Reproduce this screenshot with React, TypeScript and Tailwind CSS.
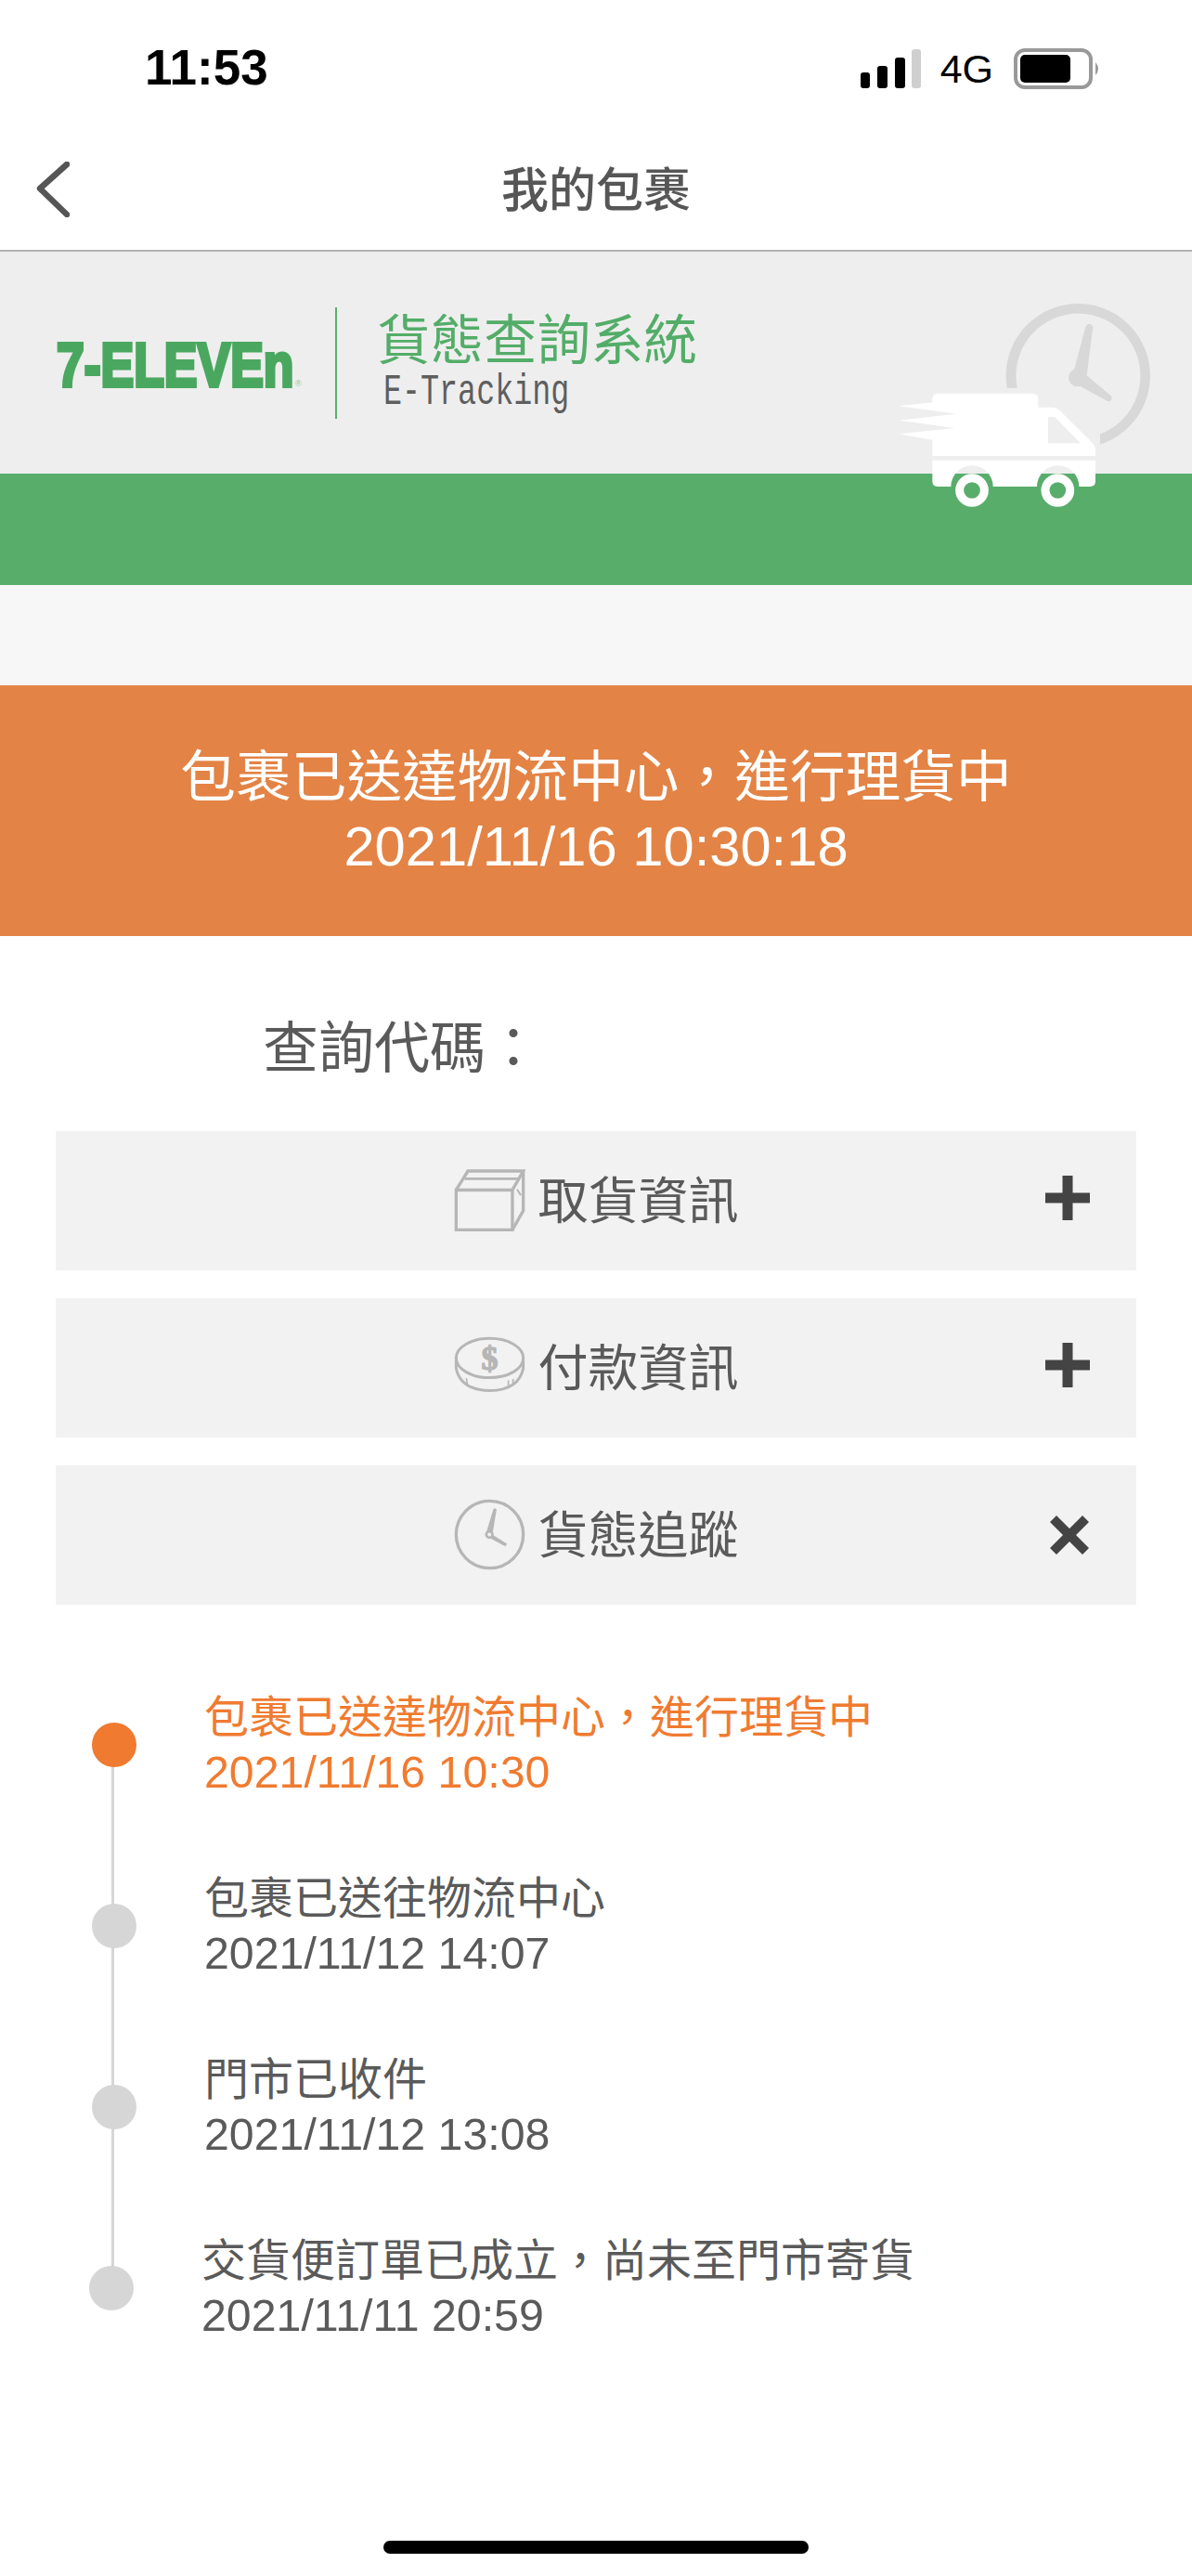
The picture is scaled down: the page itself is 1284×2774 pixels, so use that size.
import React from "react";

const SANS = "font-['Liberation_Sans','Noto_Sans_CJK_TC',sans-serif]";

function StatusBar() {
  return (
    <div className="h-[148px] flex items-center pl-[156px] pr-[97px] justify-between text-black">
      <span className="text-[53px] font-bold leading-none mb-[3px]">11:53</span>
      <div className="flex items-center">
        <svg width="66" height="42" viewBox="0 0 66 42" className="mr-[20px]">
          <rect x="0" y="25" width="10" height="17" rx="3" fill="#000" />
          <rect x="18" y="18" width="11" height="24" rx="3" fill="#000" />
          <rect x="37" y="9" width="11" height="33" rx="3" fill="#000" />
          <rect x="55" y="0" width="10" height="42" rx="3" fill="#cfcfcf" />
        </svg>
        <span className="text-[43px] font-normal leading-none mr-[22px]">4G</span>
        <svg width="95" height="44" viewBox="0 0 95 44">
          <rect x="2" y="2" width="81" height="40" rx="10" fill="none" stroke="#999" strokeWidth="4" />
          <rect x="7" y="7" width="54" height="30" rx="5" fill="#000" />
          <path d="M88 15 Q94 22 88 29 Z" fill="#999" />
        </svg>
      </div>
    </div>
  );
}

function NavBar() {
  return (
    <div className="h-[123px] border-b-2 border-[#b2b2b2] pb-[7px] relative flex items-center justify-center">
      <svg width="36" height="60" viewBox="0 0 36 60" className="absolute left-[39px] top-[26px]">
        <path d="M33 3 L4 29 L33 57" fill="none" stroke="#565656" strokeWidth="6.5" strokeLinecap="round" strokeLinejoin="round" />
      </svg>
      <span className="text-[51px] font-medium leading-none text-[#565656]">我的包裹</span>
    </div>
  );
}

function TruckClock() {
  return (
    <svg width="384" height="260" viewBox="0 0 1152 780" className="absolute right-0 top-[29px]">
      <path d="M554 353 A233 233 0 1 1 855 536 L855 502 A201 201 0 1 0 587 353 Z" fill="#d8d8d8" />
      <circle cx="782" cy="320" r="29" fill="#d8d8d8" />
      <path d="M770 300 L808 155 Q820 138 832 155 L812 312 Z" fill="#d8d8d8" />
      <path d="M808 310 L892 380 Q896 396 880 397 L790 347 Z" fill="#d8d8d8" />
      <path
        d="M313 400 L313 389 Q313 371 331 371 L637 371 Q655 371 655 389 L655 416 L700 416 Q714 416 724 426 L830 530 Q840 540 840 552 L840 573 L313 573 L313 521 L205 502 L385 483 L205 458 L390 437 L205 412 Z"
        fill="#fff"
      />
      <path d="M687 447 L708 447 L792 532 L687 532 Z" fill="#eeeeee" />
      <path
        d="M313 587 L840 587 L840 655 Q840 672 822 672 L787 672 A68 68 0 0 0 651 672 L509 672 A68 68 0 0 0 373 672 L330 672 Q313 672 313 655 Z"
        fill="#fff"
      />
      <circle cx="441" cy="684" r="40" fill="none" stroke="#fff" strokeWidth="27" />
      <circle cx="718" cy="684" r="40" fill="none" stroke="#fff" strokeWidth="27" />
    </svg>
  );
}

function Header() {
  return (
    <div className="relative">
      <div className="h-[239px] bg-[#eeeeee] flex items-center pl-[60px]">
        <svg width="270" height="60" viewBox="0 0 270 60" className="mr-[31px] mt-[2px] overflow-visible">
          <text
            transform="translate(1 54) scale(0.81 1)"
            fill="#4aa75f"
            stroke="#4aa75f"
            strokeWidth="4"
            fontFamily="'Liberation Sans', sans-serif"
            fontWeight="700"
            fontSize="66"
          >
            7-ELEVEn
          </text>
          <text x="258" y="54" fill="#8fc79c" fontFamily="'Liberation Sans', sans-serif" fontSize="9">
            ®
          </text>
        </svg>
        <div className="w-[2px] h-[120px] bg-[#5aae6e] mr-[43px]" />
        <div className="flex flex-col">
          <span className="text-[57.5px] font-normal leading-[64px] text-[#53ad68]">貨態查詢系統</span>
          <span className="font-['Liberation_Mono',monospace] text-[47px] leading-[48px] ml-[7px] origin-left scale-x-[0.71] text-[#5e5e5e] whitespace-nowrap">E-Tracking</span>
        </div>
      </div>
      <div className="h-[120px] bg-[#58ad6b]" />
      <TruckClock />
    </div>
  );
}

function BoxIcon() {
  return (
    <svg width="77" height="69" viewBox="145 118 230 206" fill="none" stroke="#b6b6b6" strokeWidth="10">
      <path d="M152 188 H333 V316 H152 Z" />
      <path d="M152 188 L190 127 H368 L333 188" />
      <path d="M368 127 V255 L333 316" />
      <path d="M180 152 H358" strokeWidth="8" />
      <path d="M348 186 L360 205" strokeWidth="6" />
    </svg>
  );
}

function CoinIcon() {
  return (
    <svg width="77" height="69" viewBox="145 670 230 206" fill="none" stroke="#b6b6b6" strokeWidth="9">
      <ellipse cx="260" cy="743" rx="108" ry="63" />
      <path d="M152 750 V775 Q165 845 260 848 Q355 845 368 775 V750" />
      <path d="M185 808 L188 828 M320 815 V832 M335 810 V828" strokeWidth="5" />
      <text x="260" y="780" textAnchor="middle" fill="#b6b6b6" stroke="#b6b6b6" strokeWidth="4" fontSize="108" fontWeight="700" fontFamily="'Liberation Serif', serif">
        $
      </text>
    </svg>
  );
}

function ClockIcon() {
  return (
    <svg width="77" height="77" viewBox="145 1185 230 230" fill="none" stroke="#b6b6b6" strokeWidth="10">
      <circle cx="260" cy="1300" r="108" />
      <circle cx="259" cy="1300" r="10" strokeWidth="8" fill="#f2f2f2" />
      <path d="M250 1290 L272 1218 Q279 1212 282 1220 L270 1292 Z" fill="#b6b6b6" stroke="none" />
      <path d="M268 1300 L316 1330 L310 1338 L262 1312 Z" fill="#b6b6b6" stroke="none" />
    </svg>
  );
}

function PlusIcon() {
  return (
    <svg width="48" height="48" viewBox="0 0 48 48" className="mb-[7px]">
      <path d="M18.5 0 H29.5 V18.5 H48 V29.5 H29.5 V48 H18.5 V29.5 H0 V18.5 H18.5 Z" fill="#444444" />
    </svg>
  );
}

function CloseIcon() {
  return (
    <svg width="42" height="42" viewBox="0 0 42 42" className="mr-[1px]">
      <path d="M7 0 L21 14 L35 0 L42 7 L28 21 L42 35 L35 42 L21 28 L7 42 L0 35 L14 21 L0 7 Z" fill="#444444" />
    </svg>
  );
}

function AccordionRow({ icon, label, action }: { icon: React.ReactNode; label: string; action: React.ReactNode }) {
  return (
    <div className="h-[150px] bg-[#f2f2f2] grid grid-cols-[1fr_auto_1fr] items-center">
      <div />
      <div className="flex items-center gap-[14px]">
        <div className="mb-[2px]">{icon}</div>
        <span className="text-[54px] leading-none text-[#5a5a5a] mt-[2px]">{label}</span>
      </div>
      <div className="flex justify-end pr-[50px]">{action}</div>
    </div>
  );
}

function TimelineItem({ title, date, active, shifted }: { title: string; date: string; active?: boolean; shifted?: boolean }) {
  return (
    <div className={`h-[195px] flex items-center relative ${shifted ? "-ml-[3px]" : ""}`}>
      <div className={`w-[48px] h-[48px] rounded-full ${active ? "bg-[#ef7a30]" : "bg-[#d6d6d6]"}`} />
      <div className={`ml-[73px] text-[48px] leading-[59px] ${active ? "text-[#f07b30]" : "text-[#5a5a5a]"}`}>
        <div>{title}</div>
        <div className="text-[48.3px]">{date}</div>
      </div>
    </div>
  );
}

export default function App() {
  return (
    <div className={`w-[1284px] h-[2774px] bg-white flex flex-col overflow-hidden ${SANS}`}>
      <StatusBar />
      <NavBar />
      <Header />
      <div className="h-[108px] bg-[#f7f7f7]" />
      <div className="h-[270px] bg-[#e38345] flex flex-col items-center justify-center pt-[4px] text-white text-[59.7px] leading-[74px]">
        <div>包裹已送達物流中心，進行理貨中</div>
        <div>2021/11/16 10:30:18</div>
      </div>
      <div className="h-[210px] pl-[283px] pt-[87px] pb-[63px] text-[60px] leading-[70px] text-[#5a5a5a]">查詢代碼：</div>
      <div className="flex flex-col gap-[30px] px-[60px]">
        <AccordionRow icon={<BoxIcon />} label="取貨資訊" action={<PlusIcon />} />
        <AccordionRow icon={<CoinIcon />} label="付款資訊" action={<PlusIcon />} />
        <AccordionRow icon={<ClockIcon />} label="貨態追蹤" action={<CloseIcon />} />
      </div>
      <div className="relative ml-[99px] mt-[53px]">
        <div className="absolute left-[21px] top-[97px] w-[3px] h-[585px] bg-[#d6d6d6]" />
        <TimelineItem active title="包裹已送達物流中心，進行理貨中" date="2021/11/16 10:30" />
        <TimelineItem title="包裹已送往物流中心" date="2021/11/12 14:07" />
        <TimelineItem title="門市已收件" date="2021/11/12 13:08" />
        <TimelineItem shifted title="交貨便訂單已成立，尚未至門市寄貨" date="2021/11/11 20:59" />
      </div>
      <div className="mt-auto mb-[24px] mx-auto w-[458px] h-[14px] rounded-full bg-black" />
    </div>
  );
}
